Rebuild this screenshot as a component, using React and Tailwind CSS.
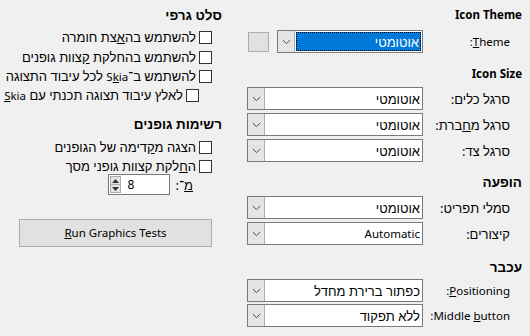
import React from "react";

function He({ children }) {
  return <span className="text-[13px] leading-[16px]">{children}</span>;
}

function HeB({ children }) {
  return <span className="text-[13.5px] leading-[16px]">{children}</span>;
}

function Chevron() {
  return (
    <svg width="9" height="6" viewBox="0 0 9 6" className="block">
      <path d="M0.8 1 L4.5 4.6 L8.2 1" fill="none" stroke="#4a4a4a" strokeWidth="1" />
    </svg>
  );
}

function Combo({ text, focused = false, wide = true }) {
  return (
    <div
      dir="ltr"
      className={`flex h-[23px] shrink-0 border border-[#7a7a7a] bg-white ${wide ? "w-[176px]" : "w-[146px]"}`}
    >
      <div className="flex w-[17px] shrink-0 items-center justify-center border-r border-[#adadad] bg-[#e5e5e5]">
        <Chevron />
      </div>
      {focused ? (
        <div className="m-[1px] flex flex-1 items-center justify-end overflow-hidden border border-dotted border-black bg-[#0078d7] pr-[1px] leading-[16px] text-white">
          {text}
        </div>
      ) : (
        <div className="flex flex-1 items-center justify-end overflow-hidden pr-[2px] leading-[16px] text-black">{text}</div>
      )}
    </div>
  );
}

function Row({ label, children, className = "" }) {
  return (
    <div className={`flex h-[23px] items-center ${className}`}>
      <div className="h-[16px] w-[99px] shrink-0 whitespace-nowrap pr-[12px] leading-[16px] text-black">{label}</div>
      {children}
    </div>
  );
}

function Heading({ children, className = "" }) {
  return <div className={`h-[16px] whitespace-nowrap font-bold leading-[16px] text-black ${className}`}>{children}</div>;
}

function Check({ children, className = "" }) {
  return (
    <div className={`flex h-[16px] items-center gap-[3px] ${className}`}>
      <div className="h-[13px] w-[13px] shrink-0 border border-[#333333] bg-white" />
      <div className="h-[16px] whitespace-nowrap leading-[16px] text-black">{children}</div>
    </div>
  );
}

function Auto() {
  return <He>אוטומטי</He>;
}

export default function App() {
  return (
    <div
      dir="rtl"
      className="flex h-[336px] w-[530px] gap-[25px] overflow-hidden bg-[#f0f0f0] pr-[8px] font-['Noto_Sans','Liberation_Sans',sans-serif] text-[11.5px]"
    >
      {/* right column */}
      <div className="flex w-[275px] shrink-0 flex-col">
        <Heading className="mt-[7px]">Icon Theme</Heading>
        <Row className="mt-[7px]" label={<span><u>T</u>heme:</span>}>
          <Combo text={<Auto />} focused wide={false} />
          <div className="mr-[8px] h-[20px] w-[21px] shrink-0 border border-[#adadad] bg-[#e1e1e1]" />
        </Row>
        <Heading className="mt-[13px]">Icon Size</Heading>
        <Row className="mt-[5px]" label={<He>סרגל כלים:</He>}>
          <Combo text={<Auto />} />
        </Row>
        <Row className="mt-[3px]" label={<He>סרגל מ<u>ח</u>ברת:</He>}>
          <Combo text={<Auto />} />
        </Row>
        <Row className="mt-[3px]" label={<He>סרגל צד:</He>}>
          <Combo text={<Auto />} />
        </Row>
        <Heading className="mt-[12px]"><HeB>הופעה</HeB></Heading>
        <Row className="mt-[6px]" label={<He>סמלי תפריט:</He>}>
          <Combo text={<Auto />} />
        </Row>
        <Row className="mt-[3px]" label={<He>קיצורים:</He>}>
          <Combo text="Automatic" />
        </Row>
        <Heading className="mt-[14px]"><HeB>עכבר</HeB></Heading>
        <Row className="mt-[4px]" label={<span><u>P</u>ositioning:</span>}>
          <Combo text={<He>כפתור ברירת מחדל</He>} />
        </Row>
        <Row className="mt-[2px]" label={<span>Middle <u>b</u>utton:</span>}>
          <Combo text={<He>ללא תפקוד</He>} />
        </Row>
      </div>

      {/* left column */}
      <div className="flex w-[212px] shrink-0 flex-col">
        <Heading className="mt-[7px]"><HeB>סלט גרפי</HeB></Heading>
        <Check className="mt-[6px] pr-[10px]">
          <He>להשתמש בה<u>א</u>צת חומרה</He>
        </Check>
        <Check className="mt-[4px] pr-[10px]">
          <He>להשתמש בהחלקת <u>ק</u>צוות גופנים</He>
        </Check>
        <Check className="mt-[3px] pr-[10px]">
          <He>להשתמש ב־</He>S<u>k</u>ia<He> לכל עיבוד התצוגה</He>
        </Check>
        <Check className="mt-[3px] pr-[23px]">
          <He>לאלץ עיבוד תצוגה תכנתי עם </He><u>S</u>kia
        </Check>
        <Heading className="mt-[13px]"><HeB>רשימות גופנים</HeB></Heading>
        <Check className="mt-[7px] pr-[10px]">
          <He>הצגה מ<u>ק</u>דימה של הגופנים</He>
        </Check>
        <Check className="mt-[3px] pr-[10px]">
          <He>ה<u>ח</u>לקת קצוות גופני מסך</He>
        </Check>
        <div className="flex h-[21px] items-center pr-[29px]">
          <div className="h-[16px] leading-[16px] text-black">
            <He><u>מ</u>־:</He>
          </div>
          <div dir="ltr" className="mr-[6px] flex h-[21px] w-[62px] items-stretch border border-[#7a7a7a] bg-white">
            <div className="m-[1px] flex w-[11px] flex-col border border-[#adadad] bg-[#e5e5e5]">
              <div className="flex flex-1 items-center justify-center border-b border-[#adadad]">
                <svg width="7" height="4" viewBox="0 0 7 4" className="block">
                  <path d="M0 4 L3.5 0 L7 4 Z" fill="#333" />
                </svg>
              </div>
              <div className="flex flex-1 items-center justify-center">
                <svg width="7" height="4" viewBox="0 0 7 4" className="block">
                  <path d="M0 0 L3.5 4 L7 0 Z" fill="#333" />
                </svg>
              </div>
            </div>
            <div className="flex items-center pl-[6px] text-[12px] text-black">8</div>
          </div>
        </div>
        <button
          dir="ltr"
          className="mr-[10px] mt-[24px] flex h-[28px] w-[193px] items-center justify-center border border-[#adadad] bg-[#e1e1e1] text-[11.5px] text-black"
        >
          <span>
            <u>R</u>un Graphics Tests
          </span>
        </button>
      </div>
    </div>
  );
}
